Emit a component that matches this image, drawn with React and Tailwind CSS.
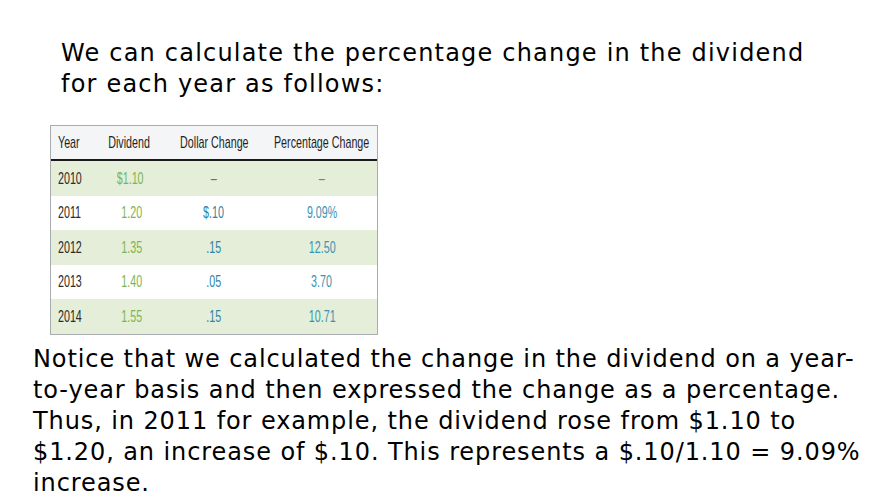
import React from 'react'

const rows = [
  { year: '2010', div: '$1.10', dollar: '–', pct: '–', band: true },
  { year: '2011', div: '1.20', dollar: '$.10', pct: '9.09%', band: false },
  { year: '2012', div: '1.35', dollar: '.15', pct: '12.50', band: true },
  { year: '2013', div: '1.40', dollar: '.05', pct: '3.70', band: false },
  { year: '2014', div: '1.55', dollar: '.15', pct: '10.71', band: true },
]

// narrow glyphs like the original table image
function N({ children, origin = 'origin-center' }) {
  return <span className={'inline-block shrink-0 scale-x-[0.63] whitespace-nowrap ' + origin}>{children}</span>
}

function DividendTable() {
  return (
    <div className="ml-[50px] w-[328px] border border-[#a9acae] font-['Liberation_Sans',sans-serif] text-[17px]">
      <div className="flex h-[35px] items-center border-b-2 border-[#1a1a1a] bg-[#f3f5f7] text-[#1f1f1f]">
        <div className="w-[50px] min-w-0 shrink-0 pl-[7px]"><N origin="origin-left">Year</N></div>
        <div className="flex w-[66px] min-w-0 shrink-0 justify-center pr-[10px]"><N>Dividend</N></div>
        <div className="flex w-[100px] min-w-0 shrink-0 justify-center pr-[6px]"><N>Dollar Change</N></div>
        <div className="flex min-w-0 flex-1 justify-center"><N>Percentage Change</N></div>
      </div>
      {rows.map((r) => (
        <div
          key={r.year}
          className={
            'flex h-[34.6px] items-center ' + (r.band ? 'bg-[#e5eed8]' : 'bg-white')
          }
        >
          <div className="w-[50px] min-w-0 shrink-0 pl-[7px] text-[#2b2b2b]"><N origin="origin-left">{r.year}</N></div>
          <div className="w-[66px] min-w-0 shrink-0 pr-[25px] text-right text-[#7cb552]"><N origin="origin-right">{r.div}</N></div>
          <div className="flex w-[100px] min-w-0 shrink-0 justify-center pr-[6px] text-[#2f84a6]"><N>{r.dollar}</N></div>
          <div className="flex min-w-0 flex-1 justify-center text-[#3b94b3]"><N>{r.pct}</N></div>
        </div>
      ))}
    </div>
  )
}

export default function App() {
  return (
    <div className="h-[495px] w-[880px] overflow-hidden bg-white font-['DejaVu_Sans',sans-serif] text-black">
      <p className="ml-[61px] w-[760px] pt-[38px] text-[24px] leading-[31px] tracking-[1.2px]">
        We can calculate the percentage change in the dividend for each year as follows:
      </p>
      <div className="mt-[25px]">
        <DividendTable />
      </div>
      <p className="ml-[33px] mr-[16px] mt-[9px] text-[24px] leading-[31px] tracking-[0.9px]">
        Notice that we calculated the change in the dividend on a year-to-year basis and then expressed the change as a percentage. Thus, in 2011 for example, the dividend rose from $1.10 to $1.20, an increase of $.10. This represents a $.10/1.10 = 9.09% increase.
      </p>
    </div>
  )
}
